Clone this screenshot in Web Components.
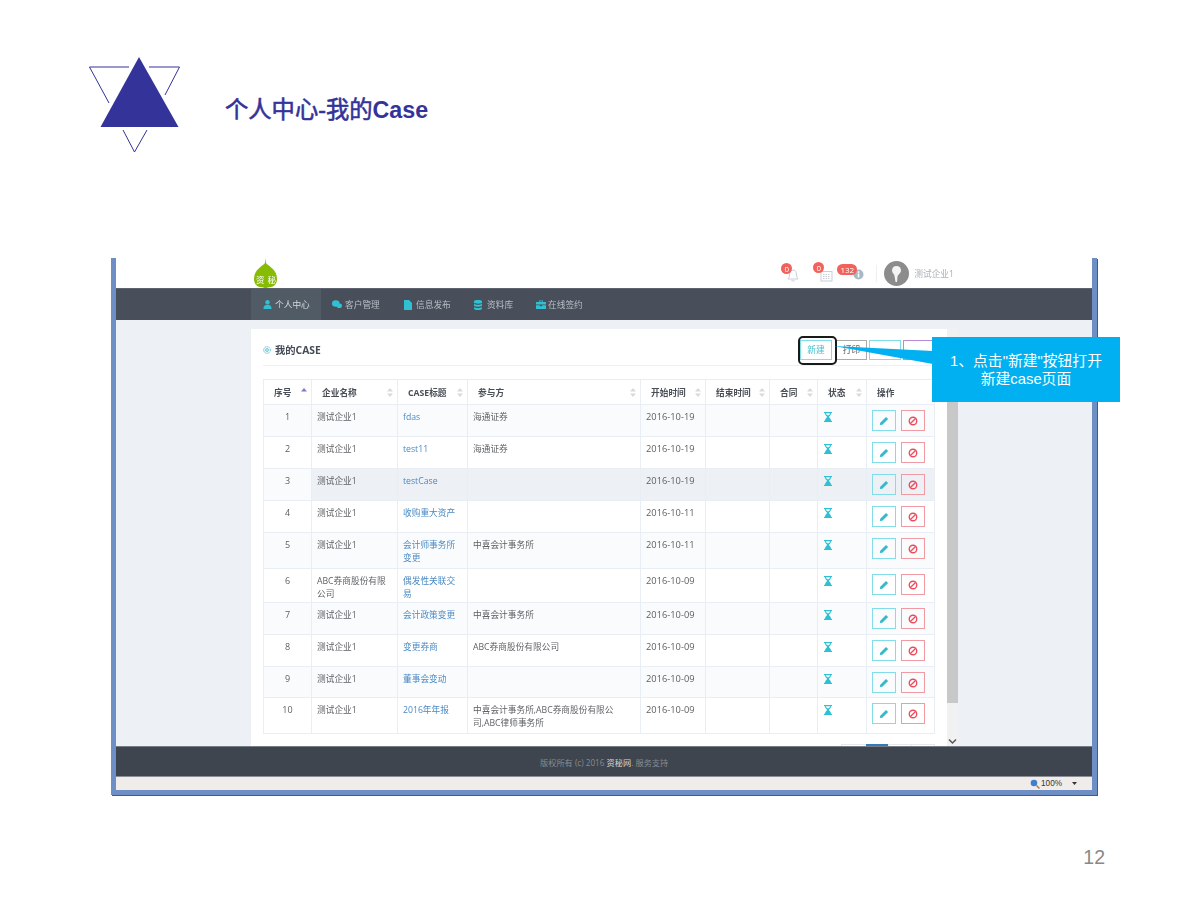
<!DOCTYPE html>
<html lang="zh">
<head>
<meta charset="utf-8">
<title>个人中心-我的Case</title>
<style>
  html, body { margin: 0; padding: 0; background: #fff; }
  body { width: 1200px; height: 900px; overflow: hidden; font-family: "Open Sans", "Noto Sans CJK SC", sans-serif; }
</style>
</head>
<body>
<slide-page>
  <slide-header slot="head">个人中心-我的<b>Case</b></slide-header>
  <browser-window slot="window">
    <top-bar></top-bar>
    <main-nav>
      <nav-item icon="user" active>个人中心</nav-item>
      <nav-item icon="chat">客户管理</nav-item>
      <nav-item icon="file">信息发布</nav-item>
      <nav-item icon="db">资料库</nav-item>
      <nav-item icon="case">在线签约</nav-item>
    </main-nav>
    <page-body>
      <case-panel>
        <case-table></case-table>
      </case-panel>
    </page-body>
    <page-footer></page-footer>
    <status-bar></status-bar>
  </browser-window>
  <slide-callout slot="over"></slide-callout>
</slide-page>

<script>
const CJK = '"Noto Sans CJK SC", sans-serif';
const UI_FONT = '"Open Sans", ' + CJK;

class SlidePage extends HTMLElement {
  connectedCallback() {
    this.attachShadow({ mode: 'open' });
    this.shadowRoot.innerHTML = `
      <style>
        :host { display: block; position: relative; width: 1200px; height: 900px; }
        .num { margin: 50px 95px 0 0; text-align: right; font: 19.500px/24px "Liberation Sans", sans-serif; color: #898989; }
      </style>
      <slot name="head"></slot>
      <slot name="window"></slot>
      <div class="num">12</div>
      <slot name="over"></slot>
    `;
  }
}
customElements.define('slide-page', SlidePage);

class SlideHeader extends HTMLElement {
  connectedCallback() {
    this.attachShadow({ mode: 'open' });
    this.shadowRoot.innerHTML = `
      <style>
        :host { display: flex; align-items: flex-start; height: 258px; box-sizing: border-box; padding: 55px 0 0 88px; }
        svg { display: block; flex: none; }
        h1 { margin: 40px 0 0 42px; font: 400 23.300px/30px "Liberation Sans", ${CJK}; color: #333399; -webkit-text-stroke: .55px #333399; }
        ::slotted(b) { font-weight: 700; -webkit-text-stroke: 0; }
      </style>
      <svg width="95" height="100" viewBox="88 55 95 100">
        <path d="M139 57 L178.500 127 L100.500 127 Z" fill="#333399"/>
        <g fill="none" stroke="#333399" stroke-width="1">
          <path d="M129 67 H89.500 L109 103"/>
          <path d="M149 67 H179.500 L165 95"/>
          <path d="M123 130 L134.500 152 L147 130"/>
        </g>
      </svg>
      <h1><slot></slot></h1>
    `;
  }
}
customElements.define('slide-header', SlideHeader);

class BrowserWindow extends HTMLElement {
  connectedCallback() {
    this.attachShadow({ mode: 'open' });
    this.shadowRoot.innerHTML = `
      <style>
        :host {
          display: flex; flex-direction: column; box-sizing: border-box;
          width: 986px; height: 537px; margin-left: 111px;
          border: solid #6d8fc6; border-width: 0 5px 5px 5px;
          box-shadow: 1px 1px 0 #4a5a70;
          background: #fff; font-family: ${UI_FONT}; filter: blur(.4px);
        }
      </style>
      <slot></slot>
    `;
  }
}
customElements.define('browser-window', BrowserWindow);

class TopBar extends HTMLElement {
  connectedCallback() {
    this.attachShadow({ mode: 'open' });
    this.shadowRoot.innerHTML = `
      <style>
        :host { display: flex; align-items: stretch; height: 30px; flex: none; padding-left: 137px; color: #a9b0ba; font-size: 8.700px; }
        .leaf { display: grid; width: 25px; }
        .leaf > * { grid-area: 1 / 1; }
        .leaf span { align-self: end; margin-bottom: 3px; text-align: center; color: #fff; font-size: 8.500px; line-height: 10px; letter-spacing: 3px; padding-left: 3px; white-space: nowrap; }
        .right { margin-left: auto; margin-right: 138px; display: flex; align-items: center; }
        .ic { position: relative; display: block; }
        .badge { position: absolute; display: block; height: 11px; min-width: 11px; box-sizing: border-box; border-radius: 6px; background: #f2625a; color: #fff; font-size: 8px; font-weight: 400; line-height: 11px; text-align: center; }
        .sep { width: 1px; height: 17px; background: #eef0f3; margin: 0 7px 0 12px; }
        .avatar { width: 25px; height: 25px; margin-right: 5px; display: block; }
      </style>
      <div class="leaf">
        <svg width="25" height="30" viewBox="0 0 25 30">
          <path d="M12.500 0 L13 5 C15 8 24 11 24 21 C24 26 21 28.500 18 29 C15.500 29.300 13.500 30 12.500 30 C11.500 30 9.500 29.300 7 29 C4 28.500 1 26 1 21 C1 11 10 8 12 5 Z" fill="#86bc04"/>
        </svg>
        <span>资秘</span>
      </div>
      <div class="right">
        <span class="ic" style="width:14px;height:16px;margin-top:6px">
          <svg width="14" height="14" viewBox="0 0 14 14" fill="none" stroke="#c9ced5" stroke-width="1"><path d="M7 2 C4 2 3.500 5 3.500 7 C3.500 9 2.500 10 2 11 H12 C11.500 10 10.500 9 10.500 7 C10.500 5 10 2 7 2 Z M5.500 12 C6 13.500 8 13.500 8.500 12"/></svg>
          <b class="badge" style="left:-5px;top:-5px">0</b>
        </span>
        <span class="ic" style="width:13px;height:14px;margin:6px 0 0 20px">
          <svg width="13" height="13" viewBox="0 0 13 13" fill="none" stroke="#c9ced5"><rect x="1" y="2.500" width="11" height="9.500"/><path d="M3 5.500h7M3 7.500h7M3 9.500h7" stroke-dasharray="1.500 1"/></svg>
          <b class="badge" style="left:-7px;top:-7px">0</b>
        </span>
        <span class="ic" style="width:11px;height:11px;margin:3px 0 0 20px">
          <svg width="11" height="11" viewBox="0 0 11 11"><circle cx="5.500" cy="5.500" r="5" fill="#a9b8c6"/><rect x="4.700" y="4.500" width="1.600" height="4" fill="#fff"/><rect x="4.700" y="2.300" width="1.600" height="1.500" fill="#fff"/></svg>
          <b class="badge" style="left:-16px;top:-5px;width:20px">132</b>
        </span>
        <span class="sep"></span>
        <svg class="avatar" viewBox="0 0 25 25">
          <circle cx="12.500" cy="12.500" r="12.500" fill="#8c8c8c"/>
          <path d="M12.500 5 C9.500 5 8 7 8 9.500 C8 12 10.500 13 10.500 15 L11.500 21 H13 L13.500 15.500 C14 13.500 17 12 17 9.500 C17 7 15.500 5 12.500 5 Z" fill="#f4f4f4"/>
        </svg>
        <span>测试企业1</span>
      </div>
    `;
  }
}
customElements.define('top-bar', TopBar);

class MainNav extends HTMLElement {
  connectedCallback() {
    this.attachShadow({ mode: 'open' });
    this.shadowRoot.innerHTML = `
      <style>
        :host { display: flex; flex: none; height: 32px; padding-left: 135px; background: #484f5b; border-top: 1px solid #5d6470; box-sizing: border-box; }
      </style>
      <slot></slot>
    `;
  }
}
customElements.define('main-nav', MainNav);

const NAV_ICONS = {
  user: '<svg width="9" height="9" viewBox="0 0 9 9"><circle cx="4.500" cy="2.300" r="2.200"/><path d="M0.500 9 C0.500 5.500 2.500 4.800 4.500 4.800 C6.500 4.800 8.500 5.500 8.500 9 Z"/></svg>',
  chat: '<svg width="10" height="9" viewBox="0 0 10 9"><ellipse cx="3.800" cy="3.500" rx="3.800" ry="3.200"/><ellipse cx="7.300" cy="5.700" rx="2.700" ry="2.300"/></svg>',
  file: '<svg width="8" height="10" viewBox="0 0 8 10"><path d="M0 0 H5 L8 3 V10 H0 Z"/></svg>',
  db: '<svg width="8" height="10" viewBox="0 0 8 10"><path d="M0 1.300 C0 -.4 8 -.4 8 1.300 V2.800 C8 4 0 4 0 2.800 Z M0 4 C2 5 6 5 8 4 V6 C6 7 2 7 0 6 Z M0 7.200 C2 8.200 6 8.200 8 7.200 V8.700 C8 10.400 0 10.400 0 8.700 Z"/></svg>',
  case: '<svg width="10" height="9" viewBox="0 0 10 9"><path d="M3 2 V.5 H7 V2 H10 V4.500 H0 V2 Z M3.800 1.200 V2 H6.200 V1.200 Z M0 5.300 H4 V6.200 H6 V5.300 H10 V9 H0 Z" fill-rule="evenodd"/></svg>'
};
// width, left padding, icon gap
const NAV_BOX = { user: [70, 12, 3], chat: [72, 11, 3], file: [70, 11, 4], db: [62, 11, 5], case: [70, 11, 2] };

class NavItem extends HTMLElement {
  connectedCallback() {
    const kind = this.getAttribute('icon');
    const box = NAV_BOX[kind];
    this.attachShadow({ mode: 'open' });
    this.shadowRoot.innerHTML = `
      <style>
        :host { display: flex; align-items: center; gap: ${box[2]}px; box-sizing: border-box; width: ${box[0]}px; padding-left: ${box[1]}px; color: #b9bfc6; font-size: 8.700px; white-space: nowrap; }
        :host([active]) { background: #505b66; color: #d5d9dd; }
        svg { fill: #2fc0d2; display: block; flex: none; }
      </style>
      ${NAV_ICONS[kind]}<slot></slot>
    `;
  }
}
customElements.define('nav-item', NavItem);

class PageBody extends HTMLElement {
  connectedCallback() {
    this.attachShadow({ mode: 'open' });
    this.shadowRoot.innerHTML = `
      <style>
        :host { display: flex; flex: none; height: 426px; overflow: hidden; padding: 9px 0 0 135px; box-sizing: border-box; background: #edf1f6; }
        .bar { width: 11px; background: #f1f1f1; display: flex; flex-direction: column; flex: none; }
        .thumb { height: 358px; margin-top: 16px; background: #c8c8c8; }
        .arrow { margin-top: auto; display: block; }
      </style>
      <slot></slot>
      <div class="bar">
        <div class="thumb"></div>
        <svg class="arrow" width="11" height="9" viewBox="0 0 11 9"><path d="M2 2.500 L5.500 6 L9 2.500" fill="none" stroke="#555" stroke-width="1.500"/></svg>
      </div>
    `;
  }
}
customElements.define('page-body', PageBody);

class CasePanel extends HTMLElement {
  connectedCallback() {
    this.attachShadow({ mode: 'open' });
    this.shadowRoot.innerHTML = `
      <style>
        :host { display: block; flex: none; width: 696px; box-sizing: border-box; padding: 0 12px; background: #fff; }
        header { display: flex; align-items: center; height: 37px; box-sizing: border-box; padding-top: 5px; border-bottom: 1px solid #eef0f3; margin-bottom: 13px; }
        h2 { margin: 0 0 0 4px; font-size: 10.300px; font-weight: 700; color: #444b55; }
        .tools { margin-left: auto; display: flex; gap: 2px; }
        .tools span { display: block; box-sizing: border-box; width: 32px; height: 20px; border: 1px solid; font-size: 8.700px; line-height: 18px; text-align: center; }
      </style>
      <header>
        <svg width="8" height="8" viewBox="0 0 8 8" fill="none" stroke="#46b6cc" stroke-width=".9"><circle cx="4" cy="4" r="1.400"/><circle cx="4" cy="4" r="3.300" stroke-dasharray="1.400 .7"/></svg>
        <h2>我的CASE</h2>
        <div class="tools">
          <span style="color:#45c0d0;border-color:#7fdde8;margin-right:2px">新建</span>
          <span style="color:#666;border-color:#aaa;width:31px">打印</span>
          <span style="border-color:#7fdde8"></span>
          <span style="border-color:#b98bd6"></span>
        </div>
      </header>
      <slot></slot>
    `;
  }
}
customElements.define('case-panel', CasePanel);

const CASE_HEADS = ['序号', '企业名称', 'CASE标题', '参与方', '开始时间', '结束时间', '合同', '状态', '操作'];
const CASE_COLS = [48, 86, 70, 173, 65, 64, 48, 49, 68];
const CASE_ROWS = [
  [1, '测试企业1', 'fdas', '海通证券', '2016-10-19', 32],
  [2, '测试企业1', 'test11', '海通证券', '2016-10-19', 32],
  [3, '测试企业1', 'testCase', '', '2016-10-19', 32],
  [4, '测试企业1', '收购重大资产', '', '2016-10-11', 32],
  [5, '测试企业1', '会计师事务所<br>变更', '中喜会计事务所', '2016-10-11', 36],
  [6, 'ABC券商股份有限<br>公司', '偶发性关联交<br>易', '', '2016-10-09', 34],
  [7, '测试企业1', '会计政策变更', '中喜会计事务所', '2016-10-09', 32],
  [8, '测试企业1', '变更券商', 'ABC券商股份有限公司', '2016-10-09', 32],
  [9, '测试企业1', '董事会变动', '', '2016-10-09', 31],
  [10, '测试企业1', '2016年年报', '中喜会计事务所,ABC券商股份有限公<br>司,ABC律师事务所', '2016-10-09', 36]
];
const HOURGLASS = '<svg width="8" height="10" viewBox="0 0 8 10"><path d="M0 0 H8 V1.300 H7 C7 3.500 5 4.200 5 5 C5 5.800 7 6.500 7 8.700 H8 V10 H0 V8.700 H1 C1 6.500 3 5.800 3 5 C3 4.200 1 3.500 1 1.300 H0 Z M2 1.300 C2 2.300 2.500 2.800 4 3.500 C5.500 2.800 6 2.300 6 1.300 Z" fill="#2fc0d2" fill-rule="evenodd"/></svg>';
const PENCIL = '<svg width="10" height="10" viewBox="0 0 9 9"><path d="M6.300 .8 L8.200 2.700 L3 7.900 L.8 8.200 L1.100 6 Z" fill="#35b9cb"/></svg>';
const BAN = '<svg width="10" height="10" viewBox="0 0 9 9" fill="none" stroke="#ea4d5c" stroke-width="1.200"><circle cx="4.500" cy="4.500" r="3.400"/><path d="M2.200 6.800 L6.800 2.200"/></svg>';
const SORT = '<svg class="sort" width="6" height="9" viewBox="0 0 6 9"><path d="M3 0 L6 3.500 H0 Z M3 9 L0 5.500 H6 Z" fill="#d6dade"/></svg>';
const SORT_UP = '<svg class="sort" width="6" height="9" viewBox="0 0 6 9"><path d="M3 0 L6 3.500 H0 Z" fill="#7f78d2"/></svg>';

class CaseTable extends HTMLElement {
  connectedCallback() {
    this.attachShadow({ mode: 'open' });
    const cols = CASE_COLS.map(w => `<col style="width:${w}px">`).join('');
    const heads = CASE_HEADS.map((h, i) =>
      `<th>${h}${i === 0 ? SORT_UP : i === 8 ? '' : SORT}</th>`).join('');
    const rows = CASE_ROWS.map(r => `
      <tr style="height:${r[5]}px" class="${r[0] === 3 ? 'hover' : ''}">
        <td class="num">${r[0]}</td>
        <td>${r[1]}</td>
        <td><a>${r[2]}</a></td>
        <td>${r[3]}</td>
        <td class="date">${r[4]}</td>
        <td></td>
        <td></td>
        <td class="state">${HOURGLASS}</td>
        <td class="ops"><span class="btn edit">${PENCIL}</span><span class="btn del">${BAN}</span></td>
      </tr>`).join('');
    this.shadowRoot.innerHTML = `
      <style>
        :host { display: block; font-size: 8.700px; color: #5c5f62; }
        table { border-collapse: collapse; table-layout: fixed; width: 671px; }
        th, td { border: 1px solid #e9eef4; padding: 0; }
        th { position: relative; height: 24px; padding-left: 10px; text-align: left; font-weight: 700; color: #4a4f57; }
        td { vertical-align: top; padding: 6px 5px 0; line-height: 12.500px; }
        tbody tr:nth-child(odd) td { background: #fafbfd; }
        tbody tr.hover td:not(.num) { background: #edf0f5; }
        .num { text-align: center; font-size: 9px; }
        .date { font-size: 9.300px; }
        a { color: #4a8ac4; }
        .sort { position: absolute; right: 4px; top: 8px; display: block; }
        .state { padding: 7px 0 0 6px; }
        .state svg { display: block; }
        .ops { padding: 5px 0 0 5px; }
        .btn { float: left; display: flex; align-items: center; justify-content: center; box-sizing: border-box; width: 24px; height: 21px; border: 1px solid; }
        .edit { border-color: #83dde8; margin-right: 5px; }
        .del { border-color: #f09aa2; }
        .pager { display: flex; justify-content: flex-end; margin-top: 10px; }
        .pager span { display: block; box-sizing: border-box; height: 24px; border: 1px solid #e6e8ec; margin-left: -1px; width: 26px; }
        .pager .on { background: #337ab7; border-color: #337ab7; width: 23px; }
        .pager .wide { width: 24px; }
      </style>
      <table>
        <colgroup>${cols}</colgroup>
        <thead><tr>${heads}</tr></thead>
        <tbody>${rows}</tbody>
      </table>
      <div class="pager"><span></span><span class="on"></span><span class="wide"></span><span class="wide"></span></div>
    `;
  }
}
customElements.define('case-table', CaseTable);

class PageFooter extends HTMLElement {
  connectedCallback() {
    this.attachShadow({ mode: 'open' });
    this.shadowRoot.innerHTML = `
      <style>
        :host { display: flex; flex: none; align-items: center; box-sizing: border-box; height: 31px; padding-left: 424px; background: #3e454e; border-top: 1px solid #777d85; border-bottom: 1px solid #8a8f95; color: #858c94; font-size: 8.200px; white-space: nowrap; }
        b { font-weight: 400; color: #d5d8db; }
      </style>
      <span>版权所有 (c) 2016 <b>资秘网</b>. 服务支持</span>
    `;
  }
}
customElements.define('page-footer', PageFooter);

class StatusBar extends HTMLElement {
  connectedCallback() {
    this.attachShadow({ mode: 'open' });
    this.shadowRoot.innerHTML = `
      <style>
        :host { display: flex; flex: 1; align-items: center; justify-content: flex-end; box-sizing: border-box; padding-right: 15px; background: #f0ecea; color: #333; font: 8.200px/12px "Liberation Sans", sans-serif; }
        svg { display: block; }
      </style>
      <svg width="10" height="10" viewBox="0 0 10 10" style="margin-right:1px"><circle cx="4" cy="4" r="3.300" fill="#3f7fd0"/><path d="M6.500 6.500 L9.500 9.500" stroke="#b08040" stroke-width="1.500"/></svg>
      <span>100%</span>
      <svg width="5" height="3" viewBox="0 0 5 3" style="margin-left:10px"><path d="M0 0 H5 L2.500 3 Z" fill="#333"/></svg>
    `;
  }
}
customElements.define('status-bar', StatusBar);

class SlideCallout extends HTMLElement {
  connectedCallback() {
    this.attachShadow({ mode: 'open' });
    this.shadowRoot.innerHTML = `
      <style>
        :host { display: block; }
        .ring { position: absolute; left: 798px; top: 336px; width: 39px; height: 29px; box-sizing: border-box; border: 2px solid #1a1a1a; border-radius: 5px; }
        svg { position: absolute; left: 830px; top: 340px; }
        .box { position: absolute; left: 932px; top: 337px; width: 188px; height: 65px; box-sizing: border-box; padding-top: 15px; background: #00b0f0; color: #fff; text-align: center; font: 14.800px/18px "Liberation Sans", ${CJK}; }
      </style>
      <div class="ring"></div>
      <svg width="103" height="30" viewBox="830 340 103 30"><path d="M834 346 L933 351 V364 Z" fill="#00b0f0"/></svg>
      <div class="box">1、点击"新建"按钮打开<br>新建case页面</div>
    `;
  }
}
customElements.define('slide-callout', SlideCallout);
</script>
</body>
</html>
